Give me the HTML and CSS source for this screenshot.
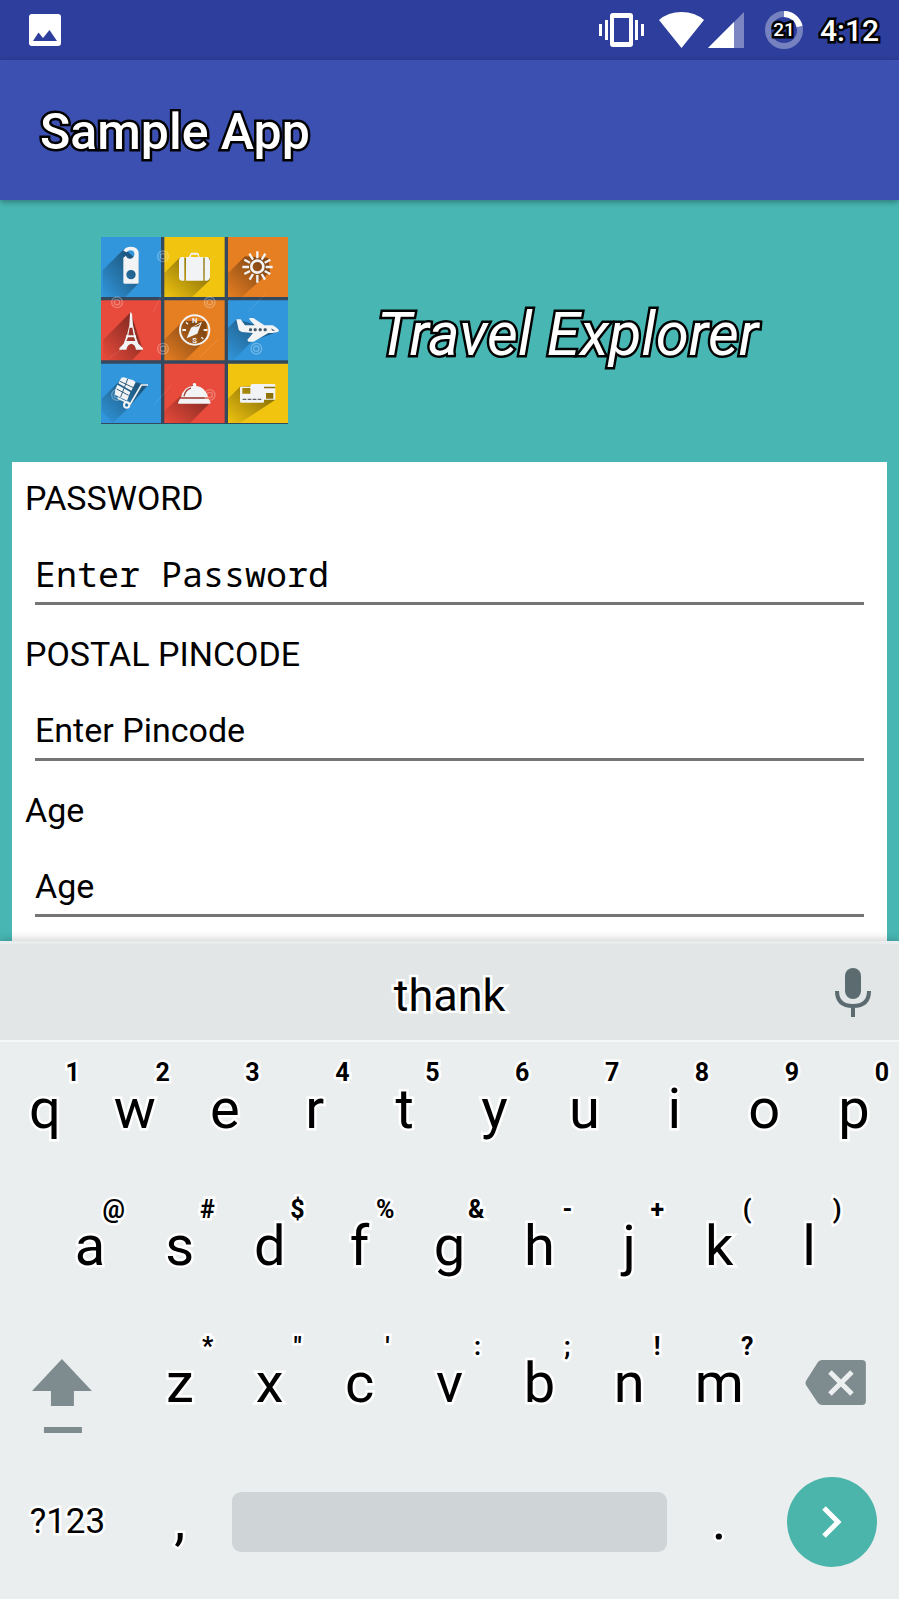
FILE: index.html
```html
<!DOCTYPE html>
<html lang="en">
<head>
<meta charset="utf-8">
<meta name="viewport" content="width=device-width, initial-scale=1">
<title>Sample App</title>
<link rel="stylesheet" href="styles.css">
</head>
<body>
<div class="phone">
  <div class="status-bar">
    <svg class="icon-photo" viewBox="0 0 32 32" width="32" height="32" aria-hidden="true"><path fill="#fff" fill-rule="evenodd" d="M3 0H29Q32 0 32 3V29Q32 32 29 32H3Q0 32 0 29V3Q0 0 3 0ZM4 27H28L20.500 16L14 24L9.500 18.500Z"/></svg>
    <div class="status-icons">
      <svg viewBox="0 0 45 36" width="45" height="36" aria-hidden="true"><path fill="#fff" fill-rule="evenodd" d="M14 1H31Q34 1 34 4V32Q34 35 31 35H14Q11 35 11 32V4Q11 1 14 1ZM15 6V30H30V6ZM0 12H3V24H0ZM6 8H9V28H6ZM36 8H39V28H36ZM42 12H45V24H42Z"/></svg>
      <svg class="icon-wifi" viewBox="0 0 45 36" width="45" height="36" aria-hidden="true"><path fill="#fff" d="M0 8Q9 0 22.500 0T45 8L22.500 36Z"/></svg>
      <svg class="icon-signal" viewBox="0 0 36 36" width="36" height="36" aria-hidden="true"><path fill="#7c86c2" d="M36 0V36H0Z"/><path fill="#fff" d="M26 10V36H0Z"/></svg>
      <div class="battery">
        <svg viewBox="0 0 38 38" width="38" height="38" aria-hidden="true"><circle cx="19" cy="19" r="16" fill="none" stroke="#7681c0" stroke-width="6"/><path d="M19 3A16 16 0 0 1 34.600 15.500" fill="none" stroke="#fff" stroke-width="6"/></svg>
        <span class="battery-level">21</span>
      </div>
      <time class="clock">4:12</time>
    </div>
  </div>

  <header class="app-bar"><h1 class="app-title">Sample App</h1></header>

  <main class="content">
    <section class="hero">
      <svg class="logo" viewBox="33 37 561 561" role="img" aria-label="Travel icons">
        <defs>
          <linearGradient id="shade" x1="1" y1="0" x2="0" y2="1"><stop offset="0.200" stop-color="#000" stop-opacity="0.420"/><stop offset="1" stop-color="#000" stop-opacity="0"/></linearGradient>
        </defs>
        <rect x="33" y="37" width="561" height="561" fill="#35495e"/>
        <g>
          <path fill="#3196db" d="M33 37H213V217H33ZM414 227H594V407H414ZM33 417H213V595H33Z"/>
          <path fill="#f0c40f" d="M223 37H404V217H223ZM414 417H594V595H414Z"/>
          <path fill="#e67e22" d="M414 37H594V217H414ZM223 227H404V407H223Z"/>
          <path fill="#e84a3b" d="M33 227H213V407H33ZM223 417H404V595H223Z"/>
        </g>
        <g fill="url(#shade)">
          <path d="M103 72L38 137V217H106L146 176V110Z"/>
          <path d="M268 100L223 145V217H306L360 166V100Z"/>
          <path d="M465 95L414 146V217H455L540 142L535 100Z"/>
          <path d="M122 263L40 345V407H126L158 374Z"/>
          <path d="M280 288L223 345V407H285L350 342V290Z"/>
          <path d="M440 284L414 310V407H430L486 350L567 320Z"/>
          <path d="M95 462L35 522V560L68 595L115 550L173 482Z"/>
          <path d="M310 478L223 560V595H300L360 535Z"/>
          <path d="M450 486L414 522V595H450L555 526V480Z"/>
        </g>
        <g fill="none" stroke="#fff" stroke-opacity="0.300" stroke-width="4">
          <g id="mark"><circle cx="219" cy="95" r="16"/><circle cx="219" cy="95" r="8"/></g>
          <use href="#mark" x="-138" y="138"/><use href="#mark" x="140" y="138"/><use href="#mark" y="277"/><use href="#mark" x="280" y="277"/><use href="#mark" x="-138" y="416"/><use href="#mark" x="140" y="416"/>
          <path stroke-width="2" stroke-opacity="0.180" d="M375 92L330 140M215 210L190 262M530 205L472 262M385 345L330 397M130 350L60 398M245 480L192 540M525 480L472 540"/>
        </g>
        <g fill="#f1f3f4">
          <path fill-rule="evenodd" d="M100 78Q106 66 123 66Q145 66 146 86V174Q146 177 142 177H103Q100 177 100 173V99L108 93Q111 103 122 102Q134 99 133 87Q132 77 121 77Q114 77 110 83ZM123 136A14 14 0 1 0 123 164A14 14 0 1 0 123 136Z"/>
          <path fill-rule="evenodd" d="M288 97H297L301 87Q302 84 306 84H321Q325 84 326 87L329 97H340V168H288ZM303 97H325L323 90H304ZM283 97V168H275Q267 167 267 158V107Q268 98 276 97ZM344 97H352Q359 99 360 108V158Q359 167 351 168H344Z"/>
          <g fill="none" stroke="#f1f3f4" stroke-width="8"><circle cx="502" cy="126" r="18"/><path stroke-width="7" d="M502 80V101M502 151V174M457 127H477M527 127H548M478 87L489 105M526 87L515 105M463 105L480 114M541 105L524 114M463 148L480 139M541 148L524 139M479 165L489 148M525 165L515 148"/></g>
          <path fill-rule="evenodd" d="M122 261L126 268L129 302L136 332H138V338L145 357L159 371V375H138Q136 359 124 357Q112 359 109 375H88V371L101 357L108 338V332H111L118 302L120 268ZM119 309L115 332H131L127 309ZM114 338L109 349H136L132 338Z"/>
          <g><circle cx="314" cy="316" r="44" fill="none" stroke="#f1f3f4" stroke-width="6"/><path fill-rule="evenodd" d="M336 291L322 327L290 341L303 309ZM309 308L326 305L331 297L306 309Z"/><path d="M277 313H288V319H277ZM341 313H352V319H341Z"/><path stroke="#f1f3f4" stroke-width="4" d="M288 293L294 299M334 338L340 343"/><text class="compass-letter" x="314" y="295" text-anchor="middle">N</text><text class="compass-letter" x="314" y="354" text-anchor="middle">S</text></g>
          <path d="M439 284H452L465 302H494L478 284V280H490L523 302H548Q565 311 567 319Q562 325 535 325L491 351H475L472 346L489 325L456 322Q445 319 445 311Z"/>
          <g fill="#41586b"><rect x="477" y="311" width="9" height="9" rx="3"/><rect x="491" y="311" width="9" height="9" rx="3"/><rect x="506" y="311" width="9" height="9" rx="3"/><rect x="521" y="311" width="9" height="9" rx="3"/><path d="M543 311L556 318H547Z"/></g>
          <path d="M94 459Q102 455 109 461L119 464Q130 464 137 473L124 498L85 476ZM82 480L121 502L111 528L75 510Q73 495 82 480Z"/>
          <path fill="none" stroke="#365f7d" stroke-width="3" d="M113 463L92 517M90 470L130 489M80 493L116 512"/>
          <path fill="none" stroke="#f1f3f4" stroke-width="5" d="M174 481H154L121 538L83 520"/>
          <circle cx="110" cy="541" r="8" fill="none" stroke="#f1f3f4" stroke-width="6"/>
          <path d="M309 483Q306 475 313 475Q321 475 318 483Q347 487 354 518H273Q279 487 309 483ZM270 522H356L362 534Q362 537 358 537H267Q264 537 264 534Z"/>
          <path fill="none" stroke="#a4443c" stroke-width="4" d="M282 515Q286 495 303 490"/>
          <path fill-rule="evenodd" d="M453 486H480L485 478H553Q556 478 556 482V525H522V531Q522 534 518 534H453Q450 534 450 530V489Q450 486 453 486ZM457 490V507H481V490ZM486 486H522V491H556V486ZM528 505V522H550V505Z"/>
          <path fill="none" stroke="#5f6368" stroke-width="4" stroke-dasharray="11 4" d="M458 524H516"/>
        </g>
      </svg>
      <h2 class="hero-title">Travel Explorer</h2>
    </section>
    <form class="card">
      <div class="field">
        <label class="field-label" for="password">PASSWORD</label>
        <input class="field-input field-input-mono" id="password" type="password" placeholder="Enter Password">
      </div>
      <div class="field">
        <label class="field-label" for="pincode">POSTAL PINCODE</label>
        <input class="field-input" id="pincode" type="text" placeholder="Enter Pincode">
      </div>
      <div class="field">
        <label class="field-label" for="age">Age</label>
        <input class="field-input" id="age" type="text" placeholder="Age">
      </div>
    </form>
  </main>

  <div class="keyboard">
    <div class="suggestions">
      <button class="suggestion" type="button">thank</button>
      <button class="mic" type="button" aria-label="Voice input"><svg viewBox="0 0 36 49" width="36" height="49" aria-hidden="true"><rect x="10" y="0" width="16" height="31" rx="8" fill="#5b6b70"/><path d="M2 23Q2 38 18 38T34 23M18 38V49" fill="none" stroke="#5b6b70" stroke-width="4"/></svg></button>
    </div>
    <div class="keys">
      <button class="key" type="button">q<span class="hint">1</span></button>
      <button class="key" type="button">w<span class="hint">2</span></button>
      <button class="key" type="button">e<span class="hint">3</span></button>
      <button class="key" type="button">r<span class="hint">4</span></button>
      <button class="key" type="button">t<span class="hint">5</span></button>
      <button class="key" type="button">y<span class="hint">6</span></button>
      <button class="key" type="button">u<span class="hint">7</span></button>
      <button class="key" type="button">i<span class="hint">8</span></button>
      <button class="key" type="button">o<span class="hint">9</span></button>
      <button class="key" type="button">p<span class="hint">0</span></button>

      <button class="key key-indent" type="button">a<span class="hint">@</span></button>
      <button class="key" type="button">s<span class="hint">#</span></button>
      <button class="key" type="button">d<span class="hint">$</span></button>
      <button class="key" type="button">f<span class="hint">%</span></button>
      <button class="key" type="button">g<span class="hint">&amp;</span></button>
      <button class="key" type="button">h<span class="hint">-</span></button>
      <button class="key" type="button">j<span class="hint">+</span></button>
      <button class="key" type="button">k<span class="hint">(</span></button>
      <button class="key" type="button">l<span class="hint">)</span></button>

      <button class="key key-wide key-icon key-first" type="button" aria-label="Shift"><svg viewBox="0 0 135 137" width="135" height="137" aria-hidden="true"><path fill="#7f8c8f" d="M62 43L92 75H74V90H51V75H32ZM44 111H82V117H44Z"/></svg></button>
      <button class="key" type="button">z<span class="hint">*</span></button>
      <button class="key" type="button">x<span class="hint">"</span></button>
      <button class="key" type="button">c<span class="hint">'</span></button>
      <button class="key" type="button">v<span class="hint">:</span></button>
      <button class="key" type="button">b<span class="hint">;</span></button>
      <button class="key" type="button">n<span class="hint">!</span></button>
      <button class="key" type="button">m<span class="hint">?</span></button>
      <button class="key key-wide key-icon" type="button" aria-label="Backspace"><svg viewBox="0 0 135 137" width="135" height="137" aria-hidden="true"><path fill="#7f8c8f" d="M58 44H98Q102 44 102 48V85Q102 89 98 89H58Q56 89 54 87L42 69Q41 67 42 65L54 46Q56 44 58 44Z"/><path d="M66 56L88 78M88 56L66 78" stroke="#eceff0" stroke-width="5" fill="none"/></svg></button>

      <button class="key key-wide key-symbols" type="button">?123</button>
      <button class="key key-punct" type="button">,</button>
      <button class="key-space" type="button" aria-label="Space"></button>
      <button class="key key-punct" type="button">.</button>
      <button class="key key-wide key-icon" type="button" aria-label="Next"><svg viewBox="0 0 90 90" width="90" height="90" aria-hidden="true"><circle cx="45" cy="45" r="45" fill="#4cb5ab"/><path d="M37 31L51 45L37 59" fill="none" stroke="#fff" stroke-width="5"/></svg></button>
    </div>
  </div>
</div>
</body>
</html>
```

FILE: styles.css
```css
* { box-sizing: border-box; }

body {
  margin: 0;
  font-family: Roboto, "Liberation Sans", sans-serif;
  color: #000;
}

button {
  margin: 0;
  padding: 0;
  border: 0;
  background: none;
  color: inherit;
  font: inherit;
}

svg { display: block; }

.phone {
  display: flex;
  flex-direction: column;
  min-height: 100vh;
  background: #48b7b3;
}

.status-bar {
  display: flex;
  align-items: center;
  justify-content: space-between;
  height: 60px;
  padding: 0 20px 0 29px;
  background: #2e3e9c;
}

.status-icons { display: flex; align-items: center; }
.icon-wifi { margin-left: 15px; }
.icon-signal { margin-left: 4px; }

.battery {
  display: grid;
  place-items: center;
  margin: 0 17px 0 21px;
}

.battery > * { grid-area: 1 / 1; }

.battery-level,
.clock,
.app-title,
.hero-title {
  color: #fff;
  -webkit-text-stroke: 5px #000;
  paint-order: stroke fill;
}

.battery-level { font-size: 19px; line-height: 22px; font-weight: 500; }
.clock { font-size: 30px; line-height: 36px; font-weight: 500; padding-top: 2px; }

.app-bar {
  position: relative;
  display: flex;
  align-items: center;
  height: 140px;
  padding: 4px 40px 0;
  background: #3c50b1;
  box-shadow: 0 2px 6px rgba(0, 0, 0, 0.35);
}

.app-title { margin: 0; font-size: 50px; line-height: 60px; font-weight: 500; }

.content { display: flex; flex: 1; flex-direction: column; }

.hero {
  display: flex;
  align-items: center;
  gap: 89px;
  padding: 37px 24px 38px 101px;
}

.logo { width: 187px; height: 187px; flex: none; }
.compass-letter { font-size: 23px; font-weight: 700; }

.hero-title {
  margin: 0;
  padding-top: 8px;
  font-size: 60px;
  line-height: 70px;
  font-weight: 400;
  font-style: italic;
}

.card { flex: 1; margin: 0 12px; background: #fff; }

.field {
  display: flex;
  flex-direction: column;
  gap: 24px;
  padding: 16px 13px 13px;
}

.field-label { font-size: 34px; line-height: 41px; }

.field-input {
  height: 62px;
  margin: 0 10px;
  padding: 10px 0 8px;
  border: 0;
  border-bottom: 3px solid #757575;
  background: none;
  color: #000;
  font-family: inherit;
  font-size: 34px;
  outline: none;
}

.field-input-mono {
  font-family: "Noto Sans Mono", "DejaVu Sans Mono", monospace;
  font-size: 35px;
}

.field-input::placeholder { color: #000; opacity: 1; }

.keyboard {
  position: relative;
  background: #ebeeef;
  box-shadow: 0 -2px 8px rgba(0, 0, 0, 0.18);
}

.suggestions {
  display: grid;
  grid-template-columns: 1fr auto 1fr;
  align-items: center;
  height: 101px;
  padding: 0 28px;
  border-top: 3px solid #eaedee;
  border-bottom: 2px solid #f6f8f8;
  background: #e2e6e7;
}

.suggestion,
.key {
  -webkit-text-stroke: 5px #fff;
  paint-order: stroke fill;
}

.suggestion { grid-column: 2; padding-top: 6px; font-size: 45px; line-height: 53px; }
.mic { justify-self: end; }

.keys {
  display: grid;
  grid-template-columns: repeat(20, 1fr);
  grid-auto-rows: 137px;
  padding-bottom: 9px;
}

.key {
  position: relative;
  grid-column: span 2;
  padding-bottom: 3px;
  font-size: 56px;
  line-height: 66px;
}

.key-indent { grid-column: 2 / span 2; }
.key-wide { grid-column: span 3; padding-bottom: 0; }

.key-icon {
  display: flex;
  align-items: center;
  justify-content: center;
}

.key-first { grid-column: 1 / span 3; }
.key-symbols { font-size: 35px; line-height: 41px; }

.hint {
  position: absolute;
  top: 16px;
  right: 10px;
  min-width: 14px;
  text-align: center;
  font-size: 25px;
  line-height: 29px;
  font-weight: 700;
}

.key-space {
  grid-column: span 10;
  height: 60px;
  margin: 0 7px;
  align-self: center;
  border-radius: 9px;
  background: #cfd4d7;
}
```
